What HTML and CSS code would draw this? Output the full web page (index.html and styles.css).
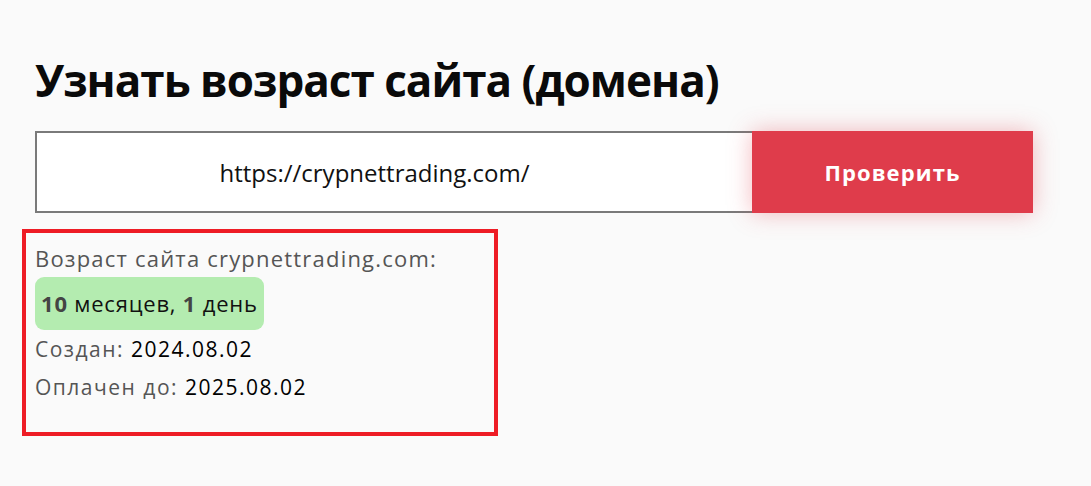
FILE: index.html
```html
<!DOCTYPE html>
<html lang="ru">
<head>
    <meta charset="UTF-8" />
    <meta name="viewport" content="width=device-width, initial-scale=1.0" />
    <title>Узнать возраст сайта</title>
    <link rel="stylesheet" href="styles.css">
</head>
<body>
    <div class="age_check">
        <h1>Узнать возраст сайта (домена)</h1>

        <form class="check_form">
            <input type="text" value="https://crypnettrading.com/" />
            <button type="submit">Проверить</button>
        </form>

        <div class="result">
            <p class="result_title">Возраст сайта crypnettrading.com:</p>
            <div class="age_badge"><b>10</b> месяцев, <b>1</b> день</div>
            <p class="result_row">Создан: <span>2024.08.02</span></p>
            <p class="result_row">Оплачен до: <span>2025.08.02</span></p>
        </div>
    </div>
</body>
</html>
```
FILE: styles.css
```css
* {
    margin: 0;
    padding: 0;
    box-sizing: border-box;
    font-family: "Open Sans", "Liberation Sans", sans-serif;
}

body {
    background: #fafafa;
    min-height: 100vh;
}

.age_check {
    padding: 55px 35px 0 35px;
}

.age_check h1 {
    font-size: 44px;
    font-weight: 700;
    color: #0a0a0a;
    line-height: 50px;
    letter-spacing: -1px;
}

/* Form row */
.check_form {
    display: flex;
    margin-top: 26px;
    width: 998px;
}

.check_form input {
    width: 717px;
    height: 82px;
    border: 2px solid #7a7a7a;
    border-right: none;
    background: #fff;
    font-size: 24px;
    text-align: center;
    padding-right: 40px;
    color: #111;
    outline: none;
}

.check_form button {
    width: 281px;
    height: 82px;
    border: none;
    background: #df3c4b;
    color: #fff;
    font-size: 22px;
    font-weight: 700;
    letter-spacing: 1.1px;
    box-shadow: 0 0 22px rgba(223, 60, 75, 0.35);
    cursor: pointer;
}

/* Result block */
.result {
    width: 476px;
    margin: 16px 0 0 -13px;
    border: 4px solid #ee1c25;
    padding: 12px 9px 26px 9px;
    display: flex;
    flex-direction: column;
    align-items: flex-start;
}

.result_title {
    font-size: 22px;
    color: #555;
    line-height: 26px;
    letter-spacing: 1.2px;
}

.age_badge {
    margin-top: 6px;
    background: #b4ecb0;
    border-radius: 9px;
    padding: 12px 6px;
    font-size: 22px;
    line-height: 29px;
    letter-spacing: 0.8px;
    color: #111;
}

.age_badge b {
    color: #444;
}

.result_row {
    font-size: 21px;
    color: #555;
    line-height: 38px;
    letter-spacing: 1.5px;
}

.result_row span {
    color: #000;
}
```
